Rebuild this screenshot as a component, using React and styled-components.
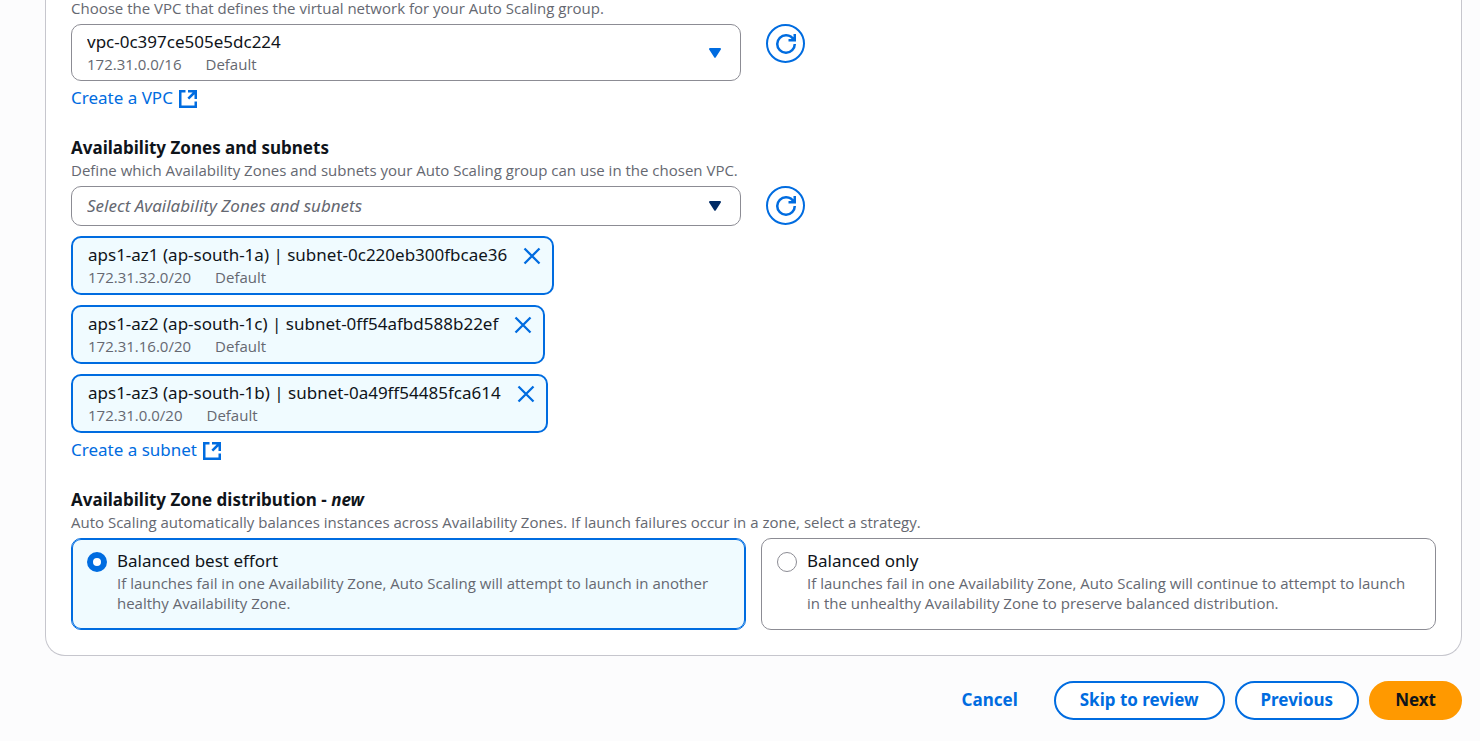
import React, { useState } from "react";
import styled, { createGlobalStyle, css } from "styled-components";

const blue = "#006ce0";
const ink = "#0f141a";
const muted = "#656871";
const line = "#8c8c94";
const tint = "#f0fbff";

const GlobalStyle = createGlobalStyle`
  *, *::before, *::after { box-sizing: border-box; }
  body {
    margin: 0;
    background: #fcfcfd;
    color: ${ink};
    font-family: "Noto Sans", "Open Sans", sans-serif;
    font-size: 17px;
    line-height: 23px;
  }
  button, select, input { font: inherit; color: inherit; margin: 0; }
`;

const smallText = css`
  margin-top: 1px;
  font-family: "Open Sans", "Noto Sans", sans-serif;
  font-size: 15px;
  line-height: 20px;
  color: ${muted};
`;

const Page = styled.main`
  padding: 0 18px 20px 45px;
`;

const Card = styled.section`
  display: flex;
  flex-direction: column;
  gap: 25px;
  margin-top: -3px;
  padding: 0 25px 25px;
  background: #fff;
  border: 1px solid #c6c6cd;
  border-top: 0;
  border-radius: 0 0 20px 20px;
`;

const Field = styled.div`
  display: flex;
  flex-direction: column;
`;

const Heading = styled.label`
  font-weight: 700;
`;

const Hint = styled.div`
  ${smallText}
`;

const Columns = styled.div`
  display: grid;
  grid-template-columns: 1fr 1fr;
  gap: 25px;
  align-items: start;
  margin-top: 6px;
`;

const SelectBox = styled.div`
  position: relative;
  display: flex;
`;

const Select = styled.select`
  appearance: none;
  width: 100%;
  height: ${(p) => (p.$tall ? 57 : 40)}px;
  padding: ${(p) => (p.$tall ? "5px 45px 27px 15px" : "6px 45px 8px 15px")};
  border: 1px solid ${line};
  border-radius: 10px;
  background: #fff;
  ${(p) =>
    p.$placeholder &&
    css`
      color: ${muted};
      font-style: italic;
    `}
`;

const SelectMeta = styled.div`
  position: absolute;
  left: 16px;
  bottom: 7px;
  pointer-events: none;
`;

const CaretIcon = styled.svg`
  position: absolute;
  right: 20px;
  top: 0;
  bottom: 0;
  margin: auto 0;
  fill: ${(p) => p.$color};
  stroke: ${(p) => p.$color};
  pointer-events: none;
`;

const Meta = styled.div`
  display: flex;
  gap: 24px;
  ${smallText}
`;

const RoundButton = styled.button`
  display: grid;
  place-items: center;
  width: 39px;
  height: 39px;
  padding: 0;
  border: 2px solid ${blue};
  border-radius: 50%;
  background: #fff;
  color: ${blue};
`;

const Link = styled.a`
  display: flex;
  align-items: flex-start;
  align-self: flex-start;
  gap: 5px;
  height: 25px;
  margin-top: 5px;
  color: ${blue};
  text-decoration: none;
  svg { margin-top: 3px; }
`;

const Tokens = styled.ul`
  display: flex;
  flex-direction: column;
  align-items: flex-start;
  gap: 10px;
  margin: 10px 0 0;
  padding: 0;
  list-style: none;
`;

const Token = styled.li`
  display: flex;
  align-items: flex-start;
  gap: 15px;
  padding: 5px 10px 6px 15px;
  border: 2px solid ${blue};
  border-radius: 10px;
  background: ${tint};
`;

const DismissButton = styled.button`
  display: grid;
  place-items: center;
  width: 20px;
  height: 25px;
  padding: 0;
  border: 0;
  background: none;
  color: ${blue};
`;

const Tiles = styled.div`
  display: grid;
  grid-template-columns: 1fr 1fr;
  gap: 15px;
  margin-top: 6px;
`;

const Tile = styled.label`
  display: flex;
  gap: 10px;
  padding: 10px 15px 16px;
  border: 1px solid ${(p) => (p.$selected ? blue : line)};
  border-radius: 10px;
  background: ${(p) => (p.$selected ? tint : "#fff")};
  box-shadow: ${(p) => (p.$selected ? `inset 0 0 0 1px ${blue}` : "none")};
`;

const Radio = styled.input`
  appearance: none;
  flex: none;
  width: 20px;
  height: 20px;
  margin-top: 3px;
  border: 1px solid ${line};
  border-radius: 50%;
  background: #fff;
  &:checked { border: 6px solid ${blue}; }
`;

const Footer = styled.footer`
  display: flex;
  justify-content: flex-end;
  gap: 10px;
  margin-top: 25px;
`;

const Button = styled.button`
  height: 39px;
  padding: 0 24px 2px;
  border: 2px solid ${blue};
  border-radius: 20px;
  background: #fff;
  color: ${blue};
  font-weight: 700;
  ${(p) =>
    p.$variant === "link" &&
    css`
      border-color: transparent;
      background: none;
    `}
  ${(p) =>
    p.$variant === "primary" &&
    css`
      border-color: #ff9900;
      background: #ff9900;
      color: ${ink};
    `}
`;

const Caret = ({ color }) => (
  <CaretIcon $color={color} width="12" height="10" viewBox="0 0 12 10" aria-hidden="true">
    <path d="M1 1h10L6 8.8z" strokeWidth="2" strokeLinejoin="round" />
  </CaretIcon>
);

const External = () => (
  <svg width="20" height="20" viewBox="0 0 20 20" fill="none" stroke="currentColor" strokeWidth="2.5" aria-hidden="true">
    <path d="M7.5 2.25H2.25v15.5h15.5V12.5M10 2.25h7.75V10M17.5 2.5l-7.2 7.2" />
  </svg>
);

const Refresh = () => (
  <svg width="20" height="20" viewBox="0 0 16 16" fill="none" stroke="currentColor" strokeWidth="2" aria-hidden="true">
    <path d="M10 5h5V0M15 8a6.957 6.957 0 0 1-7 7 6.957 6.957 0 0 1-7-7 6.957 6.957 0 0 1 7-7 6.87 6.87 0 0 1 6.3 4" />
  </svg>
);

const Close = () => (
  <svg width="20" height="20" viewBox="0 0 20 20" fill="none" stroke="currentColor" strokeWidth="2.3" aria-hidden="true">
    <path d="M2.5 2.5l15 15M17.5 2.5l-15 15" />
  </svg>
);

const subnets = [
  { name: "aps1-az1 (ap-south-1a) | subnet-0c220eb300fbcae36", cidr: "172.31.32.0/20" },
  { name: "aps1-az2 (ap-south-1c) | subnet-0ff54afbd588b22ef", cidr: "172.31.16.0/20" },
  { name: "aps1-az3 (ap-south-1b) | subnet-0a49ff54485fca614", cidr: "172.31.0.0/20" },
];

const strategies = [
  {
    id: "best-effort",
    title: "Balanced best effort",
    text: "If launches fail in one Availability Zone, Auto Scaling will attempt to launch in another healthy Availability Zone.",
  },
  {
    id: "only",
    title: "Balanced only",
    text: "If launches fail in one Availability Zone, Auto Scaling will continue to attempt to launch in the unhealthy Availability Zone to preserve balanced distribution.",
  },
];

export default function App() {
  const [chosen, setChosen] = useState(subnets);
  const [strategy, setStrategy] = useState("best-effort");

  return (
    <>
      <GlobalStyle />
      <Page>
        <Card>
          <Field>
            <Hint as="label" htmlFor="vpc">
              Choose the VPC that defines the virtual network for your Auto Scaling group.
            </Hint>
            <Columns>
              <SelectBox>
                <Select id="vpc" $tall>
                  <option>vpc-0c397ce505e5dc224</option>
                </Select>
                <SelectMeta>
                  <Meta>
                    <span>172.31.0.0/16</span>
                    <span>Default</span>
                  </Meta>
                </SelectMeta>
                <Caret color={blue} />
              </SelectBox>
              <RoundButton type="button" aria-label="Refresh VPCs">
                <Refresh />
              </RoundButton>
            </Columns>
            <Link href="#create-vpc">
              Create a VPC <External />
            </Link>
          </Field>

          <Field>
            <Heading htmlFor="zones">Availability Zones and subnets</Heading>
            <Hint>Define which Availability Zones and subnets your Auto Scaling group can use in the chosen VPC.</Hint>
            <Columns>
              <SelectBox>
                <Select id="zones" $placeholder>
                  <option>Select Availability Zones and subnets</option>
                </Select>
                <Caret color="#002b66" />
              </SelectBox>
              <RoundButton type="button" aria-label="Refresh subnets">
                <Refresh />
              </RoundButton>
            </Columns>
            <Tokens>
              {chosen.map((s) => (
                <Token key={s.name}>
                  <div>
                    {s.name}
                    <Meta>
                      <span>{s.cidr}</span>
                      <span>Default</span>
                    </Meta>
                  </div>
                  <DismissButton
                    type="button"
                    aria-label={`Remove ${s.name}`}
                    onClick={() => setChosen(chosen.filter((c) => c !== s))}
                  >
                    <Close />
                  </DismissButton>
                </Token>
              ))}
            </Tokens>
            <Link href="#create-subnet">
              Create a subnet <External />
            </Link>
          </Field>

          <Field role="radiogroup" aria-labelledby="distribution">
            <Heading as="div" id="distribution">
              Availability Zone distribution - <em>new</em>
            </Heading>
            <Hint>
              Auto Scaling automatically balances instances across Availability Zones. If launch failures occur in a
              zone, select a strategy.
            </Hint>
            <Tiles>
              {strategies.map((s) => (
                <Tile key={s.id} $selected={strategy === s.id}>
                  <Radio
                    type="radio"
                    name="strategy"
                    checked={strategy === s.id}
                    onChange={() => setStrategy(s.id)}
                  />
                  <div>
                    {s.title}
                    <Hint>{s.text}</Hint>
                  </div>
                </Tile>
              ))}
            </Tiles>
          </Field>
        </Card>

        <Footer>
          <Button type="button" $variant="link">Cancel</Button>
          <Button type="button">Skip to review</Button>
          <Button type="button">Previous</Button>
          <Button type="button" $variant="primary">Next</Button>
        </Footer>
      </Page>
    </>
  );
}
